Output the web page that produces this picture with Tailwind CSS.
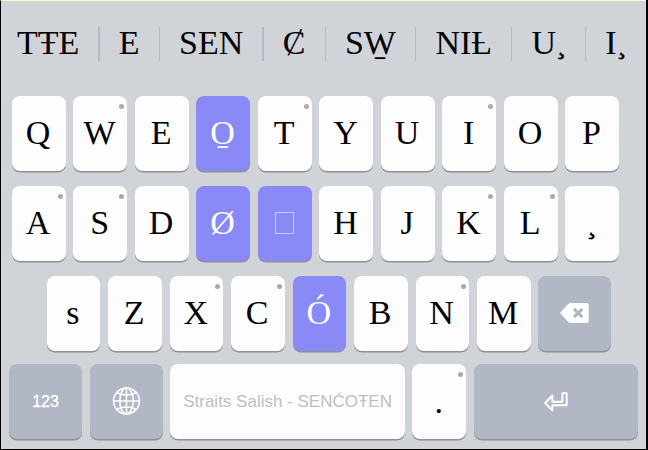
<!DOCTYPE html>
<html lang="en">
<head>
<meta charset="utf-8">
<title>Straits Salish keyboard</title>
<script src="https://cdn.jsdelivr.net/npm/@tailwindcss/browser@4"></script>
</head>
<body class="h-[450px] w-[648px] overflow-hidden bg-black">
<div class="h-[449px] w-[646px] border-l border-t border-l-black border-t-[#fdfbc4] bg-[#d0d3d8] font-['Liberation_Serif',serif] text-[34px] text-black">
  <div id="suggestions" class="flex h-[95px] items-start pl-4 pt-[26px] leading-[32px] whitespace-nowrap"></div>
  <div class="flex flex-col">
    <div id="row1" class="flex h-[75px] gap-[7.7px] pl-[11px]"></div>
    <div id="row2" class="mt-[14.7px] flex h-[75px] gap-[7.7px] pl-[11px]"></div>
    <div id="row3" class="mt-[15.3px] flex h-[75px] gap-[7.7px] pl-[45.6px]"></div>
    <div class="mt-[13px] flex h-[75px] gap-[7.7px] pl-[8px] font-['Liberation_Sans',sans-serif]">
      <div class="flex w-[73px] items-center justify-center rounded-lg bg-[#b1b7c4] pt-px text-[16px] text-white shadow-[0_1.5px_0_#8d9097] [-webkit-text-stroke:0.3px_white]">123</div>
      <div class="flex w-[73px] items-center justify-center rounded-lg bg-[#b1b7c4] pb-px shadow-[0_1.5px_0_#8d9097]">
        <svg class="h-[28px] w-[29px]" viewBox="0 0 29 29" fill="none" stroke="white" stroke-width="1.6"><circle cx="14.5" cy="14.5" r="13.4"/><ellipse cx="14.5" cy="14.5" rx="7" ry="13.4"/><path d="M14.5 1v27M1 14.5h27M4.5 6q10 4.6 20 0M4.5 23q10-4.6 20 0"/></svg>
      </div>
      <div class="flex w-[234.4px] items-center justify-center rounded-lg bg-[#fdfdfd] text-[17px] whitespace-nowrap text-[#bfbfbf] shadow-[0_1.5px_0_#8d9097]">Straits Salish - SENĆOŦEN</div>
      <div class="relative flex w-[53.8px] items-center justify-center rounded-lg bg-[#fdfdfd] font-['Liberation_Serif',serif] shadow-[0_1.5px_0_#8d9097]"><span class="pr-px">.</span><span class="absolute right-[3px] top-[8px] size-[5px] rounded-full bg-[#aaa]"></span></div>
      <div class="flex w-[164px] items-center justify-center rounded-lg bg-[#b1b7c4] shadow-[0_1.5px_0_#8d9097]">
        <svg class="mt-[2px] h-[20px] w-[24px]" viewBox="0 0 24 20" fill="none" stroke="white" stroke-width="1.9" stroke-linejoin="round"><path d="M1.2 11 8.3 3.5V9.8H18.4V1.3H22.7V13.2H8.3V18.3Z"/></svg>
      </div>
    </div>
  </div>
</div>
<template id="backspace">
  <div class="flex w-[72.5px] items-center justify-center rounded-lg bg-[#b1b7c4] pb-px shadow-[0_1.5px_0_#8d9097]">
    <svg class="h-[20px] w-[29px]" viewBox="0 0 29 20"><path fill="white" d="M0 10 8 1.2Q9 0 11 0H26.5Q28.7 0 28.7 2V18Q28.7 20 26.5 20H11Q9 20 8 18.8Z"/><path d="m14 5.8 8.4 8.4m0-8.4L14 14.2" stroke="#b1b7c4" stroke-width="3.3"/></svg>
  </div>
</template>
<script>
const base = "relative flex w-[53.8px] items-center justify-center rounded-lg pr-[1.5px] pb-[2px] shadow-[0_1.5px_0_#8d9097] ";
const light = "bg-[#fdfdfd]";
const accent = "bg-[#8a8af7] text-white";
const dot = '<span class="absolute right-[3px] top-[8px] size-[5px] rounded-full bg-[#aaa]"></span>';
const box = '<span class="mt-px h-[22px] w-[19px] border border-white/55"></span>';
const cedilla = '<span class="relative top-[-1px] text-[29px] [-webkit-text-stroke:0.4px_black]">¸</span>';
// "*" marks a key with alternates, "!" an accented key
const rows = {
  row1: ["Q", "W*", "E", "O\u0331!", "T*", "Y", "U", "I*", "O", "P"],
  row2: ["A*", "S*", "D", "Ø!", "#!", "H", "J", "K*", "L*", "¸"],
  row3: ["s", "Z", "X*", "C*", "Ó!", "B", "N*", "M"]
};
for (const [id, keys] of Object.entries(rows)) {
  document.getElementById(id).innerHTML = keys.map(k => {
    const label = k.replace(/[*!]/g, "");
    const face = label === "#" ? box : `<span>${label.replace("¸", cedilla)}</span>`;
    return `<div class="${base}${k.includes("!") ? accent : light}">${face}${k.includes("*") ? dot : ""}</div>`;
  }).join("");
}
document.getElementById("row3").append(document.getElementById("backspace").content);
document.getElementById("suggestions").innerHTML =
  ["TŦE", "E", "SEN", "Ȼ", "SW\u0331", "NI\u023D", "U¸", "I¸"]
    .map(w => `<span>${w.replace("¸", cedilla)}</span>`)
    .join('<span class="mx-[19.1px] h-[34px] w-[1.3px] shrink-0 bg-[#b4b9c8]"></span>');
</script>
</body>
</html>
